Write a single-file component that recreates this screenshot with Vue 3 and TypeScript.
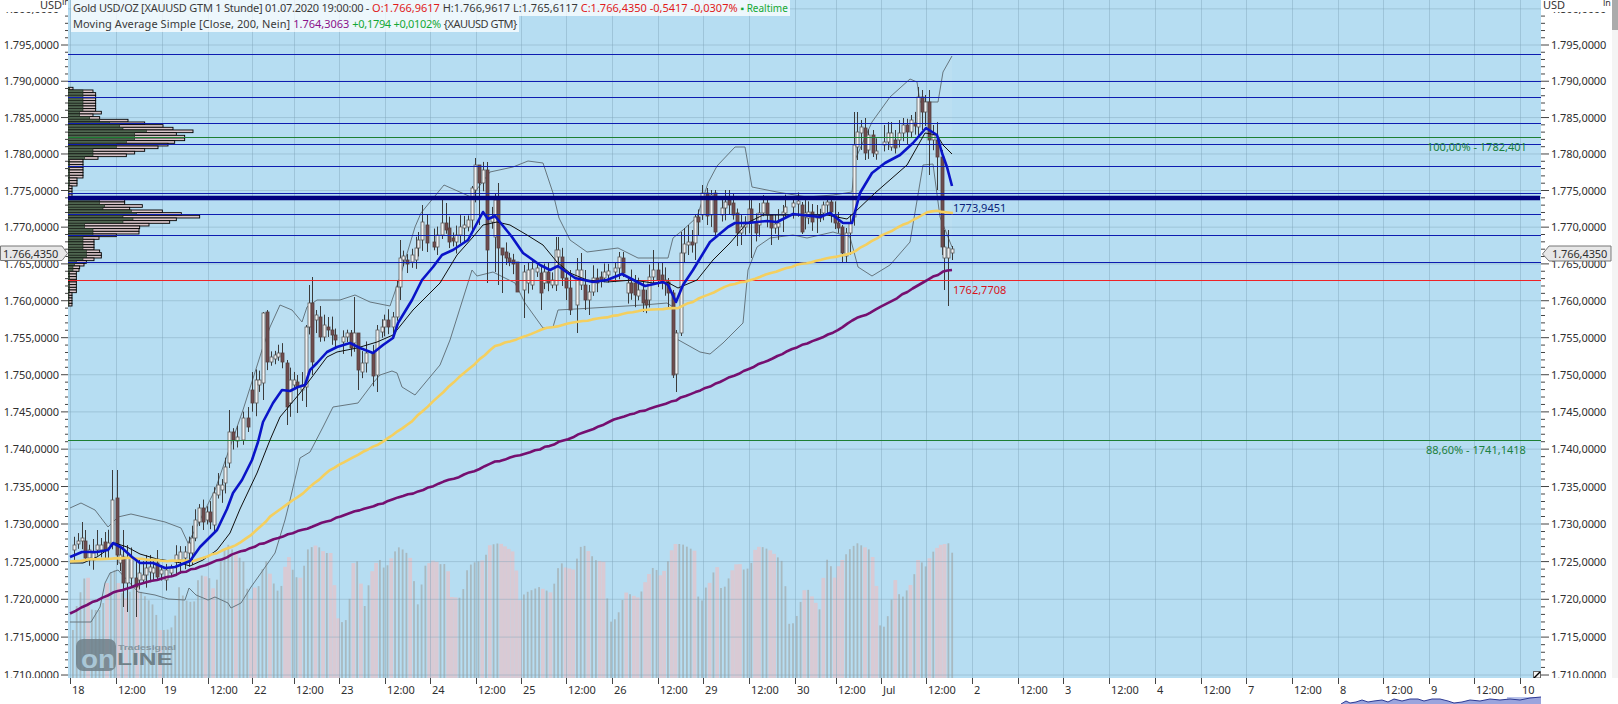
<script setup lang="ts">
type P = [number, number]
type C = [number, number, number, number, number?, number?]

const pts = (a: P[]) => a.map((p) => p.join(',')).join(' ')
const yOf = (p: number) => 45 + 12987 * Math.log(1795 / p)
const fmt = (p: number) => `1.${p - 1000},0000`

let seed = 41
const rnd = () => {
  seed = (seed * 16807) % 2147483647
  return seed / 2147483647
}
// breaks a hand-traced curve into short steps with a slight wobble, as the sampled averages have
const wobble = (a: P[], step: number, amp: number): P[] => {
  const out: P[] = []
  for (let i = 1; i < a.length; i++) {
    const [x0, y0] = a[i - 1]
    const [x1, y1] = a[i]
    const n = Math.max(1, Math.round((x1 - x0) / step))
    for (let k = 0; k < n; k++) {
      const t = k / n
      out.push([+(x0 + (x1 - x0) * t).toFixed(1), +(y0 + (y1 - y0) * t + (rnd() - 0.5) * amp).toFixed(1)])
    }
  }
  out.push(a[a.length - 1])
  return out
}

const levels: number[] = []
for (let p = 1710; p <= 1800; p += 5) levels.push(p)
const minor: number[] = []
for (let p = 1706; p <= 1801; p += 1) minor.push(p)
const priceTicks = minor.map((p) => ({ y: yOf(p), major: p % 5 === 0 }))
const priceLabels = levels.map((p) => ({ y: yOf(p), text: fmt(p) }))

const tickX = [70, 116, 162, 208, 252, 294, 339, 385, 430, 476, 521, 566, 612, 658, 703, 749, 795, 836, 881, 926, 972, 1018, 1063, 1109, 1155, 1201, 1246, 1292, 1338, 1383, 1429, 1474, 1520]
const dayNames = ['18', '19', '22', '23', '24', '25', '26', '29', '30', 'Jul', '2', '3', '4', '7', '8', '9', '10']
const timeLabels = tickX.map((x, i) => ({ x, text: i % 2 ? '12:00' : dayNames[i / 2] }))

const blueLines = [54.5, 81.5, 97.5, 123.5, 144.5, 166.5, 193.5, 214.5, 235.5, 262.5]

const blue: P[] = [[70, 557], [82, 552], [97, 552], [108, 550], [113, 543], [122, 548], [132, 557], [140, 563], [153, 563], [165, 568], [175, 567], [190, 561], [200, 547], [217, 530], [227, 509], [233, 493], [242, 480], [252, 460], [258, 442], [263, 422], [273, 403], [282, 390], [290, 391], [298, 387], [305, 385], [310, 370], [317, 363], [327, 352], [337, 347], [350, 343], [360, 348], [373, 353], [383, 345], [393, 338], [398, 323], [412, 300], [422, 280], [433, 267], [442, 255], [453, 250], [468, 240], [483, 212], [488, 219], [495, 216], [512, 237], [523, 253], [540, 265], [550, 270], [558, 266], [575, 278], [593, 282], [607, 280], [622, 274], [645, 286], [663, 282], [668, 285], [676, 302], [683, 285], [693, 270], [710, 242], [728, 227], [735, 223], [748, 223], [767, 221], [777, 222], [793, 214], [820, 217], [830, 213], [843, 223], [852, 223], [860, 193], [872, 173], [885, 163], [900, 155], [913, 143], [926, 128], [937, 135], [942, 153], [947, 167], [952, 186]]
const black: P[] = [[70, 563], [83, 563], [97, 557], [110, 548], [115, 543], [127, 547], [140, 554], [157, 559], [177, 562], [190, 566], [203, 560], [217, 550], [230, 533], [240, 509], [257, 473], [270, 440], [280, 417], [300, 393], [315, 373], [327, 357], [337, 352], [357, 348], [377, 342], [393, 335], [413, 310], [440, 283], [457, 255], [473, 237], [483, 225], [497, 222], [510, 225], [527, 235], [543, 245], [557, 262], [570, 273], [587, 280], [607, 282], [633, 280], [653, 283], [667, 282], [678, 288], [697, 280], [713, 260], [730, 243], [747, 223], [763, 215], [787, 215], [827, 215], [847, 219], [855, 212], [875, 193], [907, 165], [925, 133], [937, 135], [943, 145], [952, 154]]
const gold: P[] = wobble([[70, 562], [90, 559], [127, 558], [167, 561], [193, 561], [217, 553], [240, 543], [257, 530], [270, 517], [287, 504], [303, 493], [330, 470], [353, 457], [383, 442], [412, 421], [454, 382], [495, 346], [520, 338], [547, 328], [573, 323], [607, 317], [643, 310], [678, 308], [703, 297], [730, 285], [750, 280], [797, 265], [850, 254], [877, 238], [913, 220], [927, 212], [937, 211], [953, 213]], 5, 1)
const purple: P[] = wobble([[70, 613], [87, 605], [113, 593], [137, 585], [167, 577], [200, 567], [227, 557], [250, 548], [283, 536], [317, 525], [350, 513], [383, 503], [413, 493], [464, 475], [495, 462], [540, 449], [568, 439], [619, 418], [671, 402], [720, 382], [753, 367], [797, 347], [833, 333], [857, 318], [870, 313], [897, 298], [923, 282], [943, 272], [952, 270]], 5, 1.2)
const bbUp: P[] = [[70, 508], [81, 503], [95, 510], [108, 527], [118, 517], [131, 514], [165, 522], [181, 528], [188, 543], [195, 530], [215, 490], [223, 467], [243, 410], [262, 350], [270, 327], [280, 305], [292, 310], [302, 322], [307, 307], [317, 300], [340, 300], [355, 295], [370, 302], [390, 306], [400, 277], [415, 227], [421, 213], [444, 185], [471, 197], [490, 172], [513, 167], [528, 161], [543, 163], [553, 193], [559, 218], [570, 240], [587, 252], [618, 248], [638, 258], [668, 258], [673, 238], [683, 230], [697, 217], [708, 183], [717, 166], [735, 147], [745, 147], [752, 187], [777, 192], [807, 197], [833, 195], [852, 192], [855, 160], [872, 122], [890, 97], [910, 79], [917, 82], [920, 102], [938, 102], [943, 72], [952, 56]]
const bbDn: P[] = [[70, 622], [91, 622], [100, 607], [105, 583], [110, 573], [118, 570], [138, 592], [155, 595], [168, 599], [185, 600], [189, 588], [196, 595], [208, 600], [215, 597], [228, 603], [231, 608], [241, 603], [251, 587], [261, 573], [275, 553], [285, 520], [290, 500], [300, 458], [310, 452], [323, 427], [333, 407], [358, 403], [373, 383], [380, 375], [392, 371], [397, 373], [402, 387], [415, 395], [440, 365], [450, 340], [472, 270], [477, 276], [493, 272], [515, 283], [525, 303], [543, 328], [553, 327], [558, 310], [593, 308], [643, 305], [667, 303], [673, 307], [675, 338], [700, 352], [710, 354], [723, 343], [743, 323], [748, 270], [757, 247], [770, 238], [793, 235], [807, 238], [833, 232], [850, 237], [858, 267], [872, 276], [890, 265], [910, 242], [923, 165], [933, 164], [940, 217], [952, 247]]
const bbArea = pts([...bbUp, ...[...bbDn].reverse()])

// x, body top, body bottom, 1 = rising / 0 = falling, optional wick high, wick low
const candles: C[] = [
  [74, 545, 550, 1], [78, 541, 544, 1], [82, 538, 541, 1, 522], [85, 541, 558, 0, 530], [89, 550, 558, 1], [93, 553, 560, 1], [97, 545, 550, 1, 530], [101, 545, 550, 1], [105, 542, 550, 0, 532], [108, 543, 548, 1], [112, 500, 545, 1, 470], [117, 498, 555, 0, 470, 565], [120, 555, 563, 1], [123, 557, 583, 0, 530, 607], [127, 558, 583, 1, 545, 612], [131, 558, 578, 1], [136, 578, 587, 0, 560, 617], [139, 573, 580, 1], [143, 575, 580, 1], [146, 568, 575, 1], [150, 567, 572, 1], [153, 568, 573, 1], [157, 563, 577, 0], [161, 570, 574, 1], [166, 570, 580, 1], [171, 568, 573, 1], [176, 555, 562, 1], [180, 552, 560, 1], [185, 552, 558, 1], [189, 543, 553, 1], [192, 538, 553, 1], [195, 520, 538, 1], [199, 508, 522, 1], [203, 508, 522, 0], [207, 512, 520, 1], [210, 512, 522, 0], [214, 493, 525, 1], [218, 485, 495, 1], [222, 485, 490, 1], [225, 467, 483, 1], [229, 432, 463, 1, 410], [233, 432, 440, 0], [237, 437, 441, 1], [243, 418, 440, 1], [248, 418, 427, 0], [252, 390, 403, 0, 372], [256, 380, 403, 1], [259, 380, 385, 1], [263, 313, 383, 1, 312, 400], [267, 312, 362, 0, 310], [271, 357, 362, 1], [275, 355, 359, 1], [278, 353, 357, 1], [282, 353, 362, 0], [287, 363, 407, 0, 360, 425], [290, 380, 403, 1], [294, 380, 385, 1], [297, 382, 387, 0, 375, 413], [302, 385, 390, 1], [306, 327, 387, 1, 325, 407], [309, 303, 327, 1, 285], [312, 303, 362, 0, 277, 375], [316, 315, 320, 1], [320, 317, 337, 0, 306], [324, 325, 337, 1], [328, 327, 330, 0], [332, 330, 335, 0], [335, 335, 340, 0], [343, 337, 342, 1], [347, 333, 337, 1], [351, 333, 348, 0, 330], [354, 333, 343, 1, 297], [358, 333, 370, 0, 333, 390], [362, 363, 372, 1], [366, 353, 363, 1], [373, 353, 376, 0, 345], [377, 330, 375, 1, 325, 392], [382, 327, 332, 1], [384, 320, 327, 1], [388, 320, 327, 0], [393, 317, 327, 1], [397, 287, 317, 1], [400, 258, 287, 1, 240], [403, 256, 260, 1], [407, 260, 264, 0], [412, 255, 262, 1], [416, 248, 260, 1], [418, 240, 248, 1, 232], [422, 222, 240, 1, 205], [427, 225, 243, 0, 215], [434, 242, 247, 0], [437, 235, 247, 1], [442, 223, 235, 1, 200], [446, 223, 230, 0, 203], [449, 228, 242, 0], [453, 238, 241, 0], [456, 235, 242, 1], [460, 227, 235, 1], [464, 225, 228, 1], [468, 220, 227, 1], [472, 188, 220, 1, 186], [475, 165, 190, 1, 158], [479, 165, 183, 0, 165, 225], [483, 170, 183, 1], [487, 170, 250, 0, 162, 283], [492, 218, 222, 1], [495, 200, 237, 1, 193, 272], [498, 200, 248, 0, 183, 285], [502, 248, 255, 0, 248, 293], [506, 252, 258, 0], [509, 258, 262, 0], [513, 260, 264, 0], [517, 262, 292, 0, 262, 292], [524, 272, 290, 1, 265, 318], [528, 270, 283, 1, 262], [532, 269, 285, 1, 260], [537, 268, 272, 1], [541, 273, 293, 0, 265, 310], [544, 272, 283, 1], [548, 272, 283, 0, 262], [552, 280, 285, 1], [556, 250, 285, 1, 237], [558, 250, 257, 1, 237], [562, 257, 278, 0], [566, 278, 288, 0, 270, 300], [570, 288, 310, 0, 270, 315], [577, 270, 305, 1, 258, 333], [581, 270, 285, 1, 253, 290], [585, 285, 300, 0, 270, 310], [589, 292, 300, 1, 285, 315], [593, 278, 292, 1], [597, 278, 283, 0], [601, 277, 281, 0], [604, 272, 278, 1], [608, 271, 275, 1], [615, 268, 272, 1], [619, 257, 268, 1, 252], [623, 258, 273, 0, 252], [628, 283, 293, 1], [631, 283, 293, 0], [635, 283, 295, 0, 275], [638, 290, 296, 1], [643, 290, 303, 0, 280, 312], [646, 300, 305, 0], [649, 277, 300, 1], [653, 270, 277, 1, 250], [658, 270, 280, 0, 262], [662, 275, 283, 0], [665, 280, 283, 1], [668, 282, 293, 0, 278, 308], [673, 293, 375, 0, 290, 378], [676, 333, 374, 1, 330, 392], [681, 253, 333, 1, 232, 336], [684, 244, 253, 1, 228], [688, 242, 245, 1, 225, 255], [692, 242, 245, 0, 230], [695, 217, 243, 1, 215, 260], [698, 217, 222, 0], [702, 193, 215, 1, 185], [707, 193, 216, 0, 188, 225], [711, 195, 215, 1, 190], [715, 193, 232, 0, 190, 235], [722, 208, 215, 1], [725, 202, 208, 1, 190], [729, 200, 205, 0, 190], [733, 203, 215, 0], [737, 213, 233, 0], [741, 227, 233, 1, 215, 245], [745, 222, 227, 1], [749, 209, 223, 1, 200], [751, 209, 222, 0, 200, 258], [756, 222, 233, 0], [759, 213, 225, 1], [763, 203, 213, 1, 195], [767, 203, 215, 0, 198], [771, 215, 228, 0, 215, 245], [775, 224, 228, 1], [778, 223, 227, 1], [783, 212, 215, 1, 205, 232], [785, 207, 213, 1], [793, 203, 207, 1, 200], [798, 201, 204, 1], [802, 205, 232, 0, 202, 234], [805, 213, 217, 1], [808, 212, 218, 1], [812, 212, 222, 0], [817, 215, 218, 1, 205, 233], [820, 215, 218, 0], [823, 205, 213, 1], [827, 202, 205, 1, 197], [831, 202, 212, 0, 197], [835, 215, 223, 0], [838, 223, 228, 0], [842, 227, 253, 0, 225, 262], [846, 233, 256, 1, 228, 262], [850, 223, 233, 1, 215, 255], [854, 145, 217, 1, 112], [857, 132, 147, 1, 112, 160], [861, 127, 133, 1, 120, 150], [865, 128, 153, 0, 118, 160], [868, 135, 150, 1], [873, 135, 153, 0, 130, 157], [876, 151, 154, 1], [884, 142, 145, 1, 125], [888, 133, 142, 1, 122, 150], [891, 133, 147, 1, 122], [895, 140, 148, 0, 130], [899, 133, 140, 1, 120], [903, 125, 133, 1, 118], [907, 125, 132, 0], [911, 120, 132, 1, 115], [915, 123, 126, 0], [918, 97, 127, 1, 87], [922, 97, 112, 0, 90, 130], [925, 102, 112, 1, 95], [929, 102, 140, 0, 90, 175], [933, 135, 140, 1, 125], [937, 140, 157, 0, 122, 190], [942, 157, 247, 0, 150, 255], [944, 247, 258, 1, 230, 290], [948, 248, 258, 1, 230, 306], [952, 249, 253, 1, 246, 260]
]

const candleRows = candles.map(([x, top, bot, d, hi, lo]) => ({
  x,
  top,
  bot: Math.max(bot, top + 2),
  up: d === 1,
  hi: hi ?? top - 3 - rnd() * 11,
  lo: lo ?? bot + 3 + rnd() * 11,
}))

const volEnv: P[] = [[70, 640], [72, 620], [76, 600], [80, 588], [85, 568], [90, 610], [100, 610], [107, 573], [113, 570], [117, 585], [123, 600], [133, 583], [140, 593], [153, 607], [157, 630], [165, 630], [172, 626], [177, 587], [183, 600], [192, 603], [197, 575], [207, 577], [213, 593], [218, 560], [225, 543], [233, 553], [243, 563], [247, 607], [252, 588], [257, 586], [263, 557], [270, 580], [278, 595], [282, 570], [287, 557], [293, 577], [300, 578], [305, 550], [310, 547], [315, 545], [323, 553], [330, 553], [335, 617], [343, 625], [348, 597], [353, 548], [363, 607], [368, 577], [373, 565], [377, 558], [383, 570], [395, 548], [398, 547], [408, 556], [416, 605], [423, 566], [432, 560], [440, 565], [445, 563], [450, 597], [460, 598], [464, 572], [470, 563], [482, 560], [488, 545], [498, 543], [513, 553], [517, 602], [523, 593], [537, 587], [550, 593], [555, 573], [558, 560], [562, 567], [573, 570], [577, 548], [582, 545], [593, 560], [603, 562], [607, 623], [615, 618], [623, 592], [637, 598], [642, 585], [648, 572], [653, 565], [657, 577], [663, 570], [672, 544], [680, 544], [695, 552], [697, 618], [702, 590], [710, 580], [714, 560], [720, 593], [725, 582], [732, 567], [737, 561], [740, 570], [748, 568], [753, 550], [758, 546], [768, 550], [782, 563], [786, 624], [793, 623], [800, 597], [804, 586], [818, 610], [823, 563], [827, 557], [832, 580], [837, 565], [847, 550], [855, 543], [868, 550], [873, 563], [877, 625], [883, 627], [888, 608], [895, 572], [898, 602], [903, 593], [910, 583], [917, 557], [923, 568], [930, 553], [938, 545], [948, 543], [952, 560]]
const envAt = (x: number) => {
  for (let i = 1; i < volEnv.length; i++) {
    const [x0, y0] = volEnv[i - 1]
    const [x1, y1] = volEnv[i]
    if (x <= x1) return y0 + ((y1 - y0) * (x - x0)) / (x1 - x0)
  }
  return 678
}
const volBars = Array.from({ length: 233 }, (_, i) => {
  const x = 71 + i * 3.79
  const near = candleRows.reduce((a, b) => (Math.abs(b.x - x) < Math.abs(a.x - x) ? b : a))
  return { x, y: envAt(x), up: near.up }
})

const profileRaw: number[][] = [[40, 30], [100, 70], [108, 70], [108, 70], [108, 70], [108, 70], [108, 70], [108, 70], [108, 70], [125, 60], [100, 60], [120, 90], [205, 120], [255, 150], [310, 180], [340, 190], [400, 260], [350, 225], [375, 225], [375, 225], [345, 200], [325, 170], [295, 170], [255, 100], [225, 100], [200, 100], [115, 75], [70, 30], [70, 30], [70, 30], [70, 30], [70, 30], [70, 30], [70, 30], [52, 30], [52, 30], [52, 30], [37, 28], [37, 28], [37, 28], [37, 28], [180, 120], [195, 120], [195, 120], [248, 135], [210, 130], [308, 215], [365, 230], [420, 190], [350, 220], [330, 190], [268, 75], [240, 75], [238, 100], [238, 100], [170, 100], [118, 70], [103, 70], [103, 70], [103, 70], [103, 70], [120, 80], [125, 80], [125, 80], [103, 70], [80, 50], [73, 45], [60, 40], [58, 40], [50, 30], [50, 30], [50, 30], [50, 30], [50, 30], [50, 30], [50, 30], [50, 30], [37, 28], [37, 28], [37, 28], [37, 28], [37, 28]]
const profile = profileRaw.map(([t, g], i) => ({
  y: 87.3 + i * 2.667,
  w: (t - 25) / 3,
  g: (g - 25) / 3,
}))

const navLine: P[] = [[1341, 8], [1346, 5], [1350, 7], [1356, 6], [1362, 4], [1368, 6], [1374, 5], [1382, 4], [1388, 6], [1394, 3], [1402, 5], [1410, 3], [1418, 3], [1424, 5], [1432, 3], [1440, 3], [1448, 5], [1454, 7], [1462, 6], [1470, 4], [1480, 5], [1490, 3], [1500, 4], [1510, 3], [1520, 4], [1530, 2], [1541, 1]]
const navArea = pts([...navLine, [1541, 8], [1341, 8]])
const plotW = 1473
</script>

<template>
  <div class="page">
    <div class="chart-row">
      <svg class="axis-left" width="68" height="678" viewBox="0 0 68 678">
        <defs>
          <clipPath id="clipL"><rect x="0" y="12" width="68" height="666" /></clipPath>
        </defs>
        <text class="unit" x="40" y="9">USD</text>
        <text class="unit small" x="62" y="5">ln</text>
        <g v-for="t in priceTicks" :key="t.y">
          <line v-if="t.y > 10" class="tick" :x1="t.major ? 61 : 65" :y1="t.y" x2="68" :y2="t.y" />
        </g>
        <g clip-path="url(#clipL)">
          <text v-for="l in priceLabels" :key="l.text" class="price" x="59" :y="l.y + 4" text-anchor="end">{{ l.text }}</text>
        </g>
        <path class="marker" d="M0.5 246 H62 L67.5 253.5 L62 260.5 H0.5 Z" />
        <text class="price" x="3" y="258">1.766,4350</text>
      </svg>

      <div class="plot">
        <svg class="plot-svg" :width="plotW" height="678" viewBox="68 0 1473 678">
          <rect x="68" y="0" width="1473" height="678" class="bg" />
          <polygon :points="bbArea" class="bb-fill" />
          <rect
            v-for="v in volBars"
            :key="v.x"
            :x="v.up ? v.x + 1 : v.x"
            :y="v.y"
            :width="v.up ? 1.8 : 3.79"
            :height="678 - v.y"
            :class="v.up ? 'vol-up' : 'vol-dn'"
          />
          <line v-for="l in priceLabels" :key="l.text" class="grid" x1="68" x2="1541" :y1="l.y" :y2="l.y" />
          <line v-for="x in tickX" :key="x" class="grid" :x1="x + 0.5" :x2="x + 0.5" y1="0" y2="678" />

          <g class="logo">
            <rect x="76" y="639" width="40" height="32" rx="7" class="logo-box" />
            <text x="81" y="668" class="logo-on" textLength="34" lengthAdjust="spacingAndGlyphs">on</text>
            <text x="117" y="665" class="logo-line" textLength="56" lengthAdjust="spacingAndGlyphs">LINE</text>
            <text x="118" y="650" class="logo-brand" textLength="58" lengthAdjust="spacingAndGlyphs">Tradesignal</text>
          </g>

          <g v-for="(r, i) in profile" :key="i">
            <rect x="68" :y="r.y" :width="r.w" height="2.667" class="prof-pink" />
            <rect x="68" :y="r.y" :width="r.g" height="2.667" class="prof-green" />
          </g>

          <polyline :points="pts(bbUp)" class="bb" />
          <polyline :points="pts(bbDn)" class="bb" />

          <g v-for="c in candleRows" :key="c.x">
            <line class="wick" :x1="c.x + 0.5" :x2="c.x + 0.5" :y1="c.hi" :y2="c.lo" />
            <rect :x="c.x - 1" :y="c.top" width="3" :height="c.bot - c.top" :class="c.up ? 'c-up' : 'c-dn'" />
          </g>

          <line v-for="y in blueLines" :key="y" class="h-blue" x1="68" x2="1541" :y1="y" :y2="y" />
          <line class="h-navy" x1="68" x2="1540" y1="198" y2="198" />
          <line class="h-red" x1="68" x2="1541" y1="280.5" y2="280.5" />
          <line class="h-green" x1="68" x2="1541" y1="137.5" y2="137.5" />
          <line class="h-green" x1="68" x2="1541" y1="440.5" y2="440.5" />

          <polyline :points="pts(black)" class="ma-black" />
          <polyline :points="pts(gold)" class="ma-gold" />
          <polyline :points="pts(purple)" class="ma-purple" />
          <polyline :points="pts(blue)" class="ma-blue" />

          <text x="953" y="212" class="note navy">1773,9451</text>
          <text x="953" y="294" class="note red">1762,7708</text>
          <text x="1427" y="151" class="note green">100,00% - 1782,401</text>
          <text x="1426" y="454" class="note green">88,60% - 1741,1418</text>

          <rect x="1533.5" y="671.5" width="7" height="6.5" class="handle" />
          <line x1="1534" y1="678" x2="1540" y2="672" class="handle-line" />
        </svg>

        <div class="legend">
          <div class="legend-line">
            <span class="lead-a">Gold USD/OZ [XAUUSD GTM 1 Stunde] 01.07.2020 19:00:00 -</span> <span class="neg">O:1.766,9617</span> H:1.766,9617 L:1.765,6117 <span class="neg">C:1.766,4350 -0,5417 -0,0307%</span> <span class="pos live">▪ Realtime</span>
          </div>
          <div class="legend-line">
            <span class="lead-b">Moving Average Simple [Close, 200, Nein]</span> <span class="violet">1.764,3063</span> <span class="pos tight">+0,1794 +0,0102%</span> <span class="sym">{XAUUSD GTM}</span>
          </div>
        </div>
      </div>

      <svg class="axis-right" width="71" height="678" viewBox="0 0 71 678">
        <defs>
          <clipPath id="clipR"><rect x="0" y="12" width="71" height="666" /></clipPath>
        </defs>
        <text class="unit" x="2" y="9">USD</text>
        <text class="unit small" x="62" y="6">ln</text>
        <g v-for="t in priceTicks" :key="t.y">
          <line v-if="t.y > 10" class="tick" x1="0" :x2="t.major ? 8 : 4" :y1="t.y" :y2="t.y" />
        </g>
        <g clip-path="url(#clipR)">
          <text v-for="l in priceLabels" :key="l.text" class="price" x="10" :y="l.y + 4">{{ l.text }}</text>
        </g>
        <path class="marker" d="M1.5 254 L8 246 H70 V261 H8 Z" />
        <text class="price" x="11" y="258">1.766,4350</text>
      </svg>

      <div class="scroll"><div class="thumb"></div></div>
    </div>

    <svg class="time-axis" width="1618" height="18" viewBox="0 0 1618 18">
      <g v-for="t in timeLabels" :key="t.x">
        <line class="tick" :x1="t.x + 0.5" :x2="t.x + 0.5" y1="0" y2="6" />
        <text class="price" :x="t.x + 2" y="16">{{ t.text }}</text>
      </g>
    </svg>

    <svg class="nav" width="1618" height="8" viewBox="0 0 1618 8">
      <rect x="1507" y="1" width="34" height="7" class="nav-window" />
      <polygon :points="navArea" class="nav-area" />
      <polyline :points="pts(navLine)" class="nav-line" />
    </svg>
  </div>
</template>

<style>
html, body { margin: 0; padding: 0; overflow: hidden; background: #fff; }
</style>

<style scoped>
.page { width: 1618px; height: 704px; display: flex; flex-direction: column; background: #fff; overflow: hidden; }
.chart-row { display: flex; height: 678px; }
.axis-left, .axis-right, .plot-svg, .time-axis, .nav { display: block; flex: none; }
.plot { position: relative; width: 1473px; height: 678px; flex: none; }
.scroll { width: 6px; background: #f4f4f4; }
.thumb { height: 30px; background: #ababab; }

.price { font: 11px "Noto Sans", sans-serif; fill: #2f2f2f; letter-spacing: -0.1px; }
.unit { font: 11px "Noto Sans", sans-serif; fill: #333; }
.unit.small { font-size: 9px; }
.tick { stroke: #444; stroke-width: 1; }
.marker { fill: #e7e7e7; stroke: #777; stroke-width: 1; }

.bg { fill: #b6ddf2; }
.bb-fill { fill: #fff; opacity: 0.07; }
.grid { stroke: #7ea3b8; stroke-width: 1; opacity: 0.42; }
.vol-up { fill: #a8b9c0; }
.vol-dn { fill: #d9cad4; }

.logo-box { fill: #6e7f88; opacity: 0.85; }
.logo-on { font: 700 25px "Liberation Sans", sans-serif; fill: #a9c6d6; }
.logo-line { font: 700 16px "Liberation Sans", sans-serif; fill: #6f8189; }
.logo-brand { font: 700 8px "Liberation Sans", sans-serif; fill: #8596a0; }

.prof-pink { fill: #d9c5c9; stroke: #000; stroke-width: 0.9; }
.prof-green { fill: #4f6550; stroke: #1f281f; stroke-width: 0.6; }

.wick { stroke: #3b3b3b; stroke-width: 1; }
.c-up { fill: #eef1f2; stroke: #5c5c5c; stroke-width: 0.8; }
.c-dn { fill: #6f4c4e; stroke: #55403f; stroke-width: 0.8; }

.h-blue { stroke: #0d1cb0; stroke-width: 1; }
.h-navy { stroke: #00007f; stroke-width: 4.5; }
.h-red { stroke: #ee2226; stroke-width: 1; }
.h-green { stroke: #1d7f33; stroke-width: 1; }

.bb { fill: none; stroke: #66767f; stroke-width: 1; }
.ma-black { fill: none; stroke: #101010; stroke-width: 1; }
.ma-gold { fill: none; stroke: #f4cf5f; stroke-width: 2.6; stroke-linejoin: round; }
.ma-purple { fill: none; stroke: #750f70; stroke-width: 2.6; stroke-linejoin: round; }
.ma-blue { fill: none; stroke: #0a14c8; stroke-width: 2.6; stroke-linejoin: round; }

.note { font: 11px "Noto Sans", sans-serif; }
.note.navy { fill: #0b1f7a; }
.note.red { fill: #d8141c; }
.note.green { fill: #1b8040; }

.handle { fill: #f4f4f4; stroke: #666; stroke-width: 1; }
.handle-line { stroke: #000; stroke-width: 1.4; }

.legend { position: absolute; left: 3px; top: 0; font: 11px/16px "Noto Sans", sans-serif; color: #3a3a3a; white-space: nowrap; }
.legend-line { background: rgba(255, 255, 255, 0.75); padding: 0 2px; width: max-content; height: 16px; }
.lead-a { letter-spacing: -0.24px; }
.lead-b { letter-spacing: 0.08px; }
.neg { color: #e01b1b; }
.pos { color: #14a835; }
.tight { letter-spacing: -0.3px; }
.sym { letter-spacing: -0.5px; }
.violet { color: #8a128a; }
.live { font-size: 10px; }

.nav-window { fill: #b9c3ea; }
.nav-area { fill: #9aa4dd; }
.nav-line { fill: none; stroke: #2e3a94; stroke-width: 1; }
</style>
